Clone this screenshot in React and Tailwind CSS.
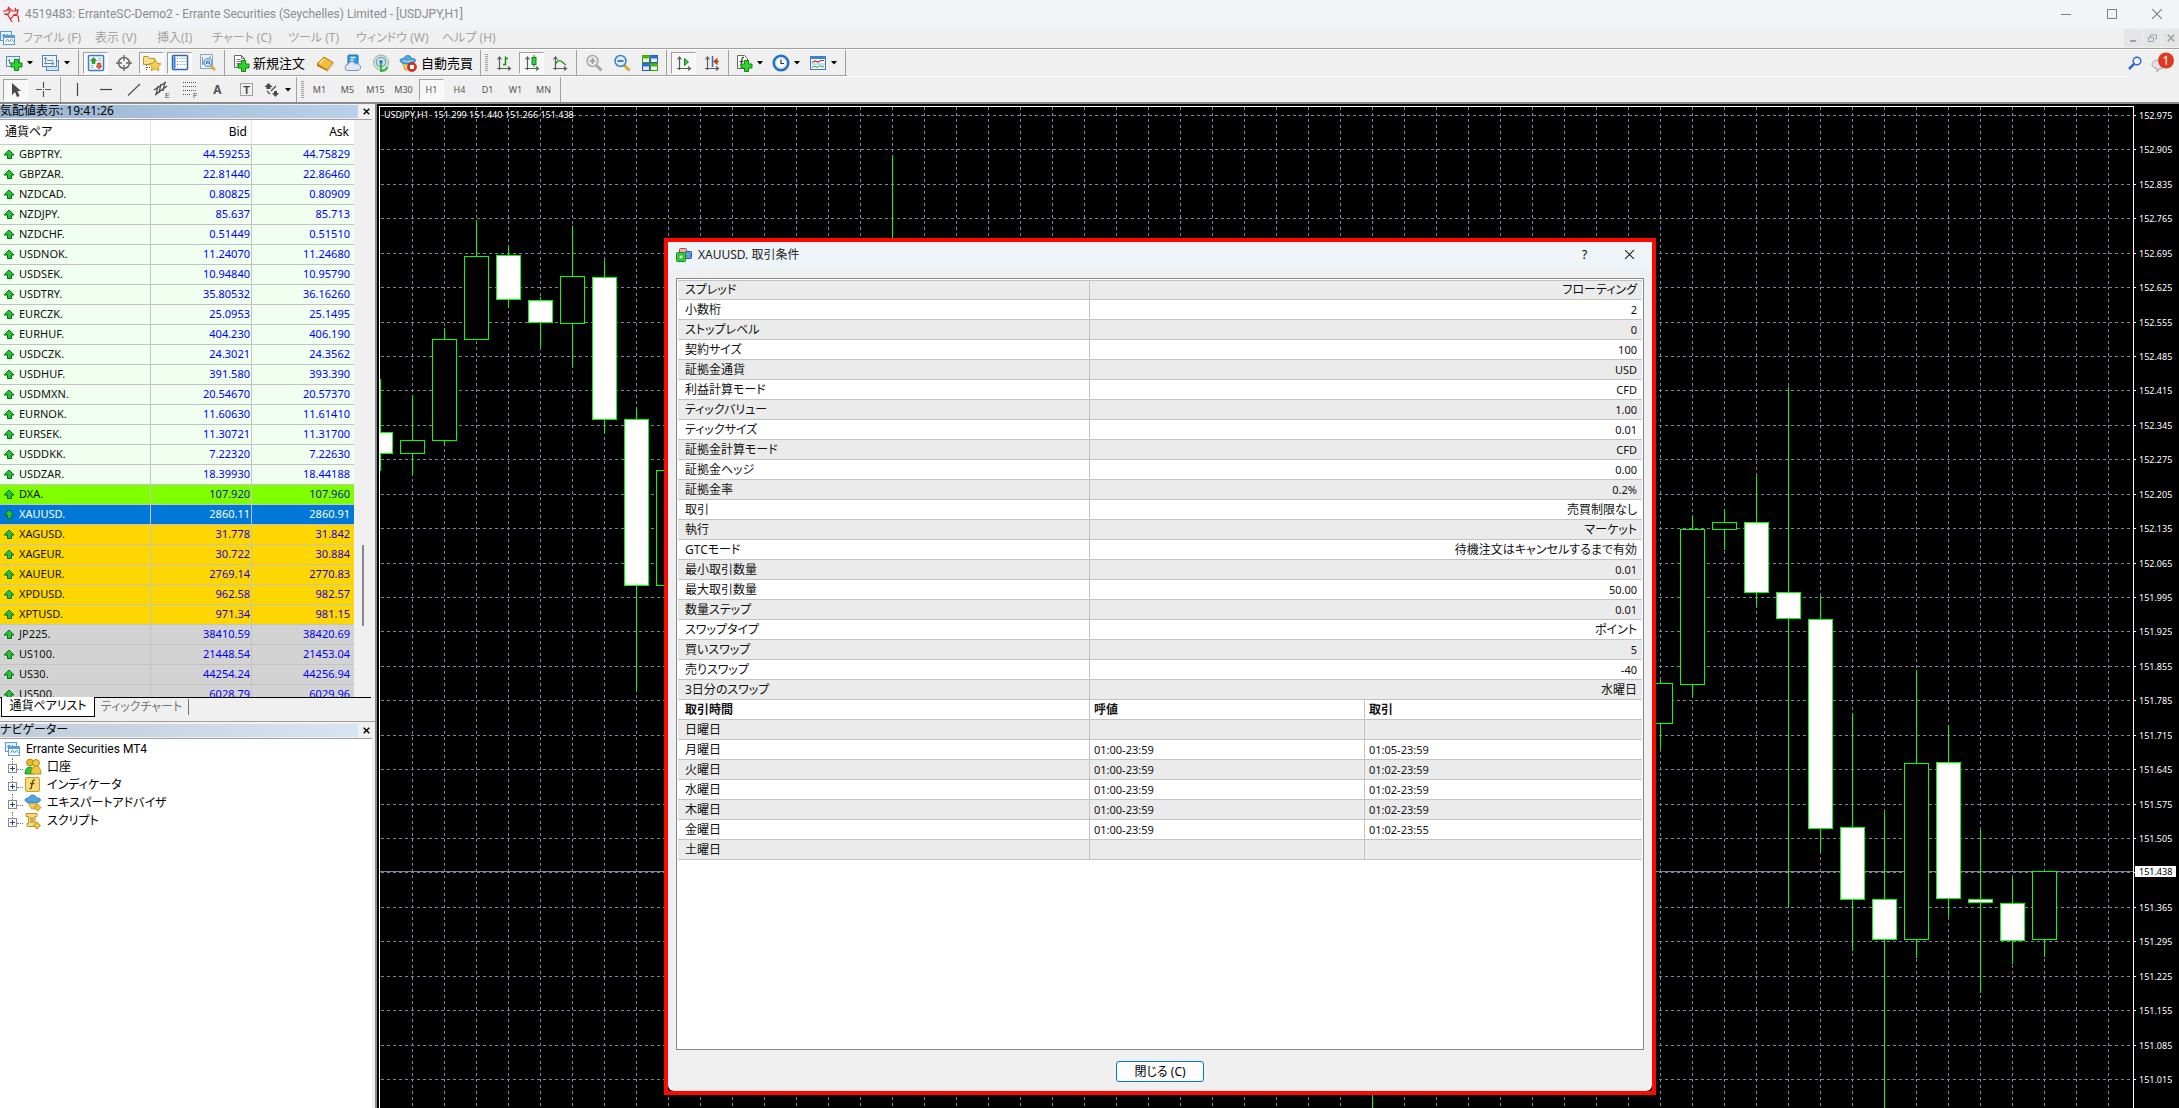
import React from "react";

const JP = "font-['Noto_Sans','Noto_Sans_CJK_JP',sans-serif]";

/* ---------- data ---------- */

const QUOTES = [
  ["GBPTRY.", "44.59253", "44.75829", "fx"],
  ["GBPZAR.", "22.81440", "22.86460", "fx"],
  ["NZDCAD.", "0.80825", "0.80909", "fx"],
  ["NZDJPY.", "85.637", "85.713", "fx"],
  ["NZDCHF.", "0.51449", "0.51510", "fx"],
  ["USDNOK.", "11.24070", "11.24680", "fx"],
  ["USDSEK.", "10.94840", "10.95790", "fx"],
  ["USDTRY.", "35.80532", "36.16260", "fx"],
  ["EURCZK.", "25.0953", "25.1495", "fx"],
  ["EURHUF.", "404.230", "406.190", "fx"],
  ["USDCZK.", "24.3021", "24.3562", "fx"],
  ["USDHUF.", "391.580", "393.390", "fx"],
  ["USDMXN.", "20.54670", "20.57370", "fx"],
  ["EURNOK.", "11.60630", "11.61410", "fx"],
  ["EURSEK.", "11.30721", "11.31700", "fx"],
  ["USDDKK.", "7.22320", "7.22630", "fx"],
  ["USDZAR.", "18.39930", "18.44188", "fx"],
  ["DXA.", "107.920", "107.960", "dxa"],
  ["XAUUSD.", "2860.11", "2860.91", "sel"],
  ["XAGUSD.", "31.778", "31.842", "metal"],
  ["XAGEUR.", "30.722", "30.884", "metal"],
  ["XAUEUR.", "2769.14", "2770.83", "metal"],
  ["XPDUSD.", "962.58", "982.57", "metal"],
  ["XPTUSD.", "971.34", "981.15", "metal"],
  ["JP225.", "38410.59", "38420.69", "index"],
  ["US100.", "21448.54", "21453.04", "index"],
  ["US30.", "44254.24", "44256.94", "index"],
  ["US500.", "6028.79", "6029.96", "index"],
];

const ROW_STYLE = {
  fx: "bg-[#f0fff0] text-[#0000f5]",
  dxa: "bg-[#7fff00] text-[#0a1aa0]",
  sel: "bg-[#0078d7] text-white",
  metal: "bg-[#ffd700] text-[#1c00d0]",
  index: "bg-[#d3d3d3] text-[#0000f5]",
};

const SPECS = [
  ["スプレッド", "フローティング"],
  ["小数桁", "2"],
  ["ストップレベル", "0"],
  ["契約サイズ", "100"],
  ["証拠金通貨", "USD"],
  ["利益計算モード", "CFD"],
  ["ティックバリュー", "1.00"],
  ["ティックサイズ", "0.01"],
  ["証拠金計算モード", "CFD"],
  ["証拠金ヘッジ", "0.00"],
  ["証拠金率", "0.2%"],
  ["取引", "売買制限なし"],
  ["執行", "マーケット"],
  ["GTCモード", "待機注文はキャンセルするまで有効"],
  ["最小取引数量", "0.01"],
  ["最大取引数量", "50.00"],
  ["数量ステップ", "0.01"],
  ["スワップタイプ", "ポイント"],
  ["買いスワップ", "5"],
  ["売りスワップ", "-40"],
  ["3日分のスワップ", "水曜日"],
];

const SESSIONS = [
  ["日曜日", "", ""],
  ["月曜日", "01:00-23:59", "01:05-23:59"],
  ["火曜日", "01:00-23:59", "01:02-23:59"],
  ["水曜日", "01:00-23:59", "01:02-23:59"],
  ["木曜日", "01:00-23:59", "01:02-23:59"],
  ["金曜日", "01:00-23:59", "01:02-23:55"],
  ["土曜日", "", ""],
];

/* centre x, body top, body bottom, high, low, bearish */
const CANDLES = [
  [380, 432, 453, 379, 471, 1],
  [412, 440, 453, 395, 475, 0],
  [444, 339, 440, 328, 445, 0],
  [476, 256, 339, 220, 339, 0],
  [508, 255, 299, 247, 308, 1],
  [540, 300, 322, 297, 347, 1],
  [572, 276, 323, 226, 367, 0],
  [604, 277, 419, 260, 434, 1],
  [636, 419, 585, 408, 691, 1],
  [668, 470, 585, 460, 600, 0],
  [892, 300, 420, 155, 500, 0],
  [1372, 700, 900, 650, 1108, 1],
  [1660, 683, 723, 680, 749, 0],
  [1692, 529, 684, 516, 697, 0],
  [1724, 522, 529, 509, 550, 0],
  [1756, 522, 592, 476, 606, 1],
  [1788, 592, 618, 387, 907, 1],
  [1820, 619, 828, 596, 852, 1],
  [1852, 827, 899, 713, 951, 1],
  [1884, 899, 939, 812, 1108, 1],
  [1916, 763, 939, 670, 958, 0],
  [1948, 762, 898, 725, 917, 1],
  [1980, 899, 902, 830, 993, 1],
  [2012, 903, 940, 878, 964, 1],
  [2044, 871, 939, 871, 957, 0],
];

const LEVELS = Array.from({ length: 29 }, (_, i) => ({
  y: Math.round(115 + i * 34.43),
  label: (152.975 - i * 0.07).toFixed(3),
}));

/* ---------- icons ---------- */

const S = ({ w = 18, h = 18, children }) => (
  <svg width={w} height={h} viewBox={`0 0 ${w} ${h}`} className="shrink-0" aria-hidden="true">{children}</svg>
);

const Plus = ({ x = 8, y = 7 }) => (
  <path d={`M${x + 3.5} ${y + .5}h4v3.5h3.500v4h-3.500v3.500h-4v-3.500h-3.500v-4h3.500z`} fill="#2fd32f" stroke="#0a8a0a" />
);

const NewChartIcon = () => (
  <S>
    <rect x="1.500" y="2.500" width="13" height="10" fill="#e9f3fc" stroke="#5b8cc0" />
    <path d="M4.500 5v5M3 6.500h1.500M4.500 8.500h2M10.500 4.500v4" stroke="#6a87a8" fill="none" />
    <Plus x={6} y={5} />
  </S>
);
const ProfilesIcon = () => (
  <S>
    <rect x="4.500" y="6.500" width="12" height="10" fill="#cfe4f8" stroke="#5b8cc0" />
    <rect x=".5" y="1.500" width="14" height="11" fill="#eef6fd" stroke="#4d82bd" />
    <path d="M3.500 3.500v7M2 9.500h10M10 8l2 1.500-2 1.500M2 5l1.500-1.500L5 5M5 6.500h6" stroke="#6a87a8" fill="none" />
  </S>
);
const MarketWatchIcon = () => (
  <S>
    <rect x="1.500" y="1.500" width="15" height="15" rx="1" fill="#f3f9ff" stroke="#3f7fc0" strokeWidth="1.5" />
    <path d="M3.500 6.500l3-3 3 3H8v3H5v-3z" fill="#25b025" stroke="#0b7a0b" strokeWidth=".6" />
    <path d="M9 12l3 3 3-3h-1.500V9h-3v3z" fill="#f2603a" stroke="#b22a12" strokeWidth=".6" />
    <path d="M3.500 11.500h3M3.500 13.500h3M11 4.500h3M11 6.500h3" stroke="#9bb9d6" />
  </S>
);
const DataWindowIcon = () => (
  <S>
    <circle cx="9" cy="9" r="5.500" fill="none" stroke="#666" strokeWidth="1.500" />
    <path d="M9 1v6M9 11v6M1 9h6M11 9h6" stroke="#666" strokeWidth="1.300" />
  </S>
);
const NavigatorIcon = () => (
  <S w={20}>
    <path d="M1.500 3.500v7h11v-6h-5l-1.500-2h-4z" fill="#f8df83" stroke="#b9932a" />
    <path d="M4.500 11v5M5 13.500h3" stroke="#555" strokeDasharray="1 1" />
    <path d="M13 5.500l1.900 3.700 4.100.6-3 2.900.7 4-3.700-1.900-3.700 1.900.7-4-3-2.900 4.100-.6z" fill="#fbcf45" stroke="#b7861a" strokeWidth=".8" />
  </S>
);
const TerminalIcon = () => (
  <S>
    <rect x="1.500" y="1.500" width="15" height="14" rx="1" fill="#fff" stroke="#2e67ad" strokeWidth="1.500" />
    <path d="M3.500 2.500v12" stroke="#2f7fe0" strokeWidth="2" />
    <path d="M6 4.500h1M6 7.500h1M6 10.500h1" stroke="#d33" />
    <path d="M8 4.500h7M8 7.500h7M8 10.500h7" stroke="#b9cfe8" />
  </S>
);
const TesterIcon = () => (
  <S>
    <rect x="1.500" y=".5" width="12" height="14" fill="#f0f4f9" stroke="#8fa6bf" />
    <path d="M3.500 3v8M3 9h3M11 2v7" stroke="#7892ad" />
    <circle cx="9" cy="8.500" r="4" fill="#cfe6fa" fillOpacity=".85" stroke="#5a92c7" strokeWidth="1.200" />
    <path d="M7.500 7v3M9 6v4M10.500 7.500v3" stroke="#4477a8" />
    <path d="M12 12l4 4" stroke="#d8a92c" strokeWidth="2.500" />
  </S>
);
const NewOrderIcon = () => (
  <S>
    <path d="M2.500 1.500h7l3 3v9h-10z" fill="#fff" stroke="#666" />
    <path d="M9.500 1.500v3h3M4.500 5.500h4M4.500 7.500h6M4.500 9.500h4M4.500 11.500h3" stroke="#777" fill="none" />
    <Plus x={6} y={6} />
  </S>
);
const BookIcon = () => (
  <S>
    <path d="M1 10l7-7 9 5.500-6 7.500z" fill="#f3bf3b" stroke="#a9741a" />
    <path d="M1 10v2l10 5v-1.500z" fill="#b87a1c" />
    <path d="M11 16l6-7.500v2L11 17.500z" fill="#fff3cf" stroke="#a9741a" strokeWidth=".5" />
    <path d="M4 9l4-4" stroke="#ffe79a" strokeWidth="1.500" />
  </S>
);
const VpsIcon = () => (
  <S>
    <rect x="4" y="1" width="10" height="10" rx="1" fill="#2f9be8" stroke="#1a6db3" />
    <path d="M6.500 3.500h5M6.500 6h3" stroke="#e3f3ff" strokeWidth="1.300" />
    <path d="M4 16.500a3 3 0 010-6 4 4 0 017.500-.5 3.300 3.300 0 013 6.500z" fill="#dfe8f3" stroke="#7b97b8" />
  </S>
);
const SignalIcon = () => (
  <S>
    <circle cx="9" cy="8.500" r="7.500" fill="#d5e6d8" stroke="#8fb59c" />
    <circle cx="9" cy="8" r="4.700" fill="none" stroke="#6a9fc4" strokeWidth="1.300" />
    <circle cx="9" cy="8" r="2" fill="#2f86d0" />
    <path d="M9 9v8c4 0 6-2 6.500-4" fill="none" stroke="#3fb049" strokeWidth="2" />
  </S>
);
const AutoIcon = () => (
  <S>
    <path d="M3 8h11l-2 8H6z" fill="#f3cf58" stroke="#b08a24" strokeWidth=".7" />
    <path d="M1 6.500c0-2 3-2 4-2 .5-4 7-4 7.500 0 1 0 4 0 4 2S13.500 10 9 10 1 8.500 1 6.500z" fill="#4fa7dd" stroke="#2575ab" strokeWidth=".8" />
    <path d="M4 6.500c2 1.500 7 1.500 9.500 0" fill="none" stroke="#bfe3f7" />
    <circle cx="13" cy="13" r="4.500" fill="#dd3423" stroke="#9e1c10" strokeWidth=".6" />
    <rect x="11" y="11" width="4" height="4" fill="#fff" />
  </S>
);
const Axes = () => (
  <path d="M4.500 3v13M2.500 5.500l2-2.500 2 2.500M2 14.500h13M13 12.500l2.500 2-2.500 2" fill="none" stroke="#5c5c5c" strokeWidth="1.200" />
);
const BarsIcon = () => (<S><Axes /><path d="M10.500 2.500v9M10.500 4.500h2.500M8 10.500h2.500" stroke="#159015" strokeWidth="1.500" fill="none" /></S>);
const CandlesIcon = () => (<S><Axes /><path d="M11 1v12" stroke="#118811" /><rect x="9" y="3.500" width="4" height="7" fill="#2fd04a" stroke="#118811" /></S>);
const LineIcon = () => (<S><Axes /><path d="M4 11c2-4 4-5 6-4s3 3 5 4" fill="none" stroke="#159015" strokeWidth="1.300" /></S>);
const ZoomIcon = ({ plus }) => (
  <S>
    <path d="M11 11l5.500 5.500" stroke={plus ? "#a5a5a5" : "#d8a92c"} strokeWidth="3" />
    <circle cx="7.500" cy="7" r="5.500" fill={plus ? "#ececec" : "#d9edfc"} stroke={plus ? "#a8a8a8" : "#3c83c6"} strokeWidth="1.500" />
    <path d={plus ? "M4.500 7h6M7.500 4v6" : "M4.500 7h6"} stroke={plus ? "#999" : "#2d6cae"} strokeWidth="1.700" />
  </S>
);
const TileIcon = () => (
  <S>
    <rect x="1.500" y="1.500" width="7" height="7" fill="#e9f8e0" stroke="#3e9a12" /><path d="M1 3h8" stroke="#4db51b" strokeWidth="3" />
    <rect x="9.500" y="1.500" width="7" height="7" fill="#e3edfb" stroke="#2458b8" /><path d="M9 3h8" stroke="#2e6be0" strokeWidth="3" />
    <rect x="1.500" y="9.500" width="7" height="7" fill="#e3edfb" stroke="#2458b8" /><path d="M1 11h8" stroke="#2e6be0" strokeWidth="3" />
    <rect x="9.500" y="9.500" width="7" height="7" fill="#e9f8e0" stroke="#3e9a12" /><path d="M9 11h8" stroke="#4db51b" strokeWidth="3" />
  </S>
);
const AutoScrollIcon = () => (<S><Axes /><path d="M9.500 4.500v7l4-3.500z" fill="#35c94a" stroke="#118811" /></S>);
const ShiftIcon = () => (<S><Axes /><path d="M9.500 2v11" stroke="#2c6fb5" strokeWidth="1.500" /><path d="M16 7.500h-4M14 5l-3 2.500 3 2.500z" stroke="#c2410c" strokeWidth="1.200" fill="#c2410c" /></S>);
const IndicatorsIcon = () => (
  <S>
    <path d="M2.500 1.500h7l3 3v10h-10z" fill="#fff" stroke="#666" />
    <path d="M9 3.500c-2-.5-2 1-2.200 3L6 12M4.500 7.500h4" stroke="#333" fill="none" strokeWidth="1.200" />
    <Plus x={6} y={6} />
  </S>
);
const ClockIcon = () => (
  <S>
    <circle cx="9" cy="9" r="7.300" fill="#eef5fb" stroke="#1f6fcb" strokeWidth="2.500" />
    <circle cx="9" cy="9" r="5.300" fill="#fff" stroke="#9fb9d4" strokeWidth=".6" />
    <path d="M9 5.500V9.500h3" stroke="#333" fill="none" strokeWidth="1.200" />
  </S>
);
const TemplateIcon = () => (
  <S>
    <rect x="1.500" y="2.500" width="15" height="13" fill="#f4f9ff" stroke="#3b78bd" />
    <path d="M1 3.500h16" stroke="#3b82d0" strokeWidth="3" />
    <path d="M2 10h14" stroke="#9cc0e4" />
    <path d="M3 8.500l3-1.500 3 1 3-1.500h3" stroke="#b5381c" fill="none" strokeWidth="1.200" />
    <path d="M3 13.500l3-1.500 2 1.500 3-2 2 1.500 2-1" stroke="#2c9a2c" fill="none" />
  </S>
);
const CursorIcon = () => (<S><path d="M5 2v12l3-3 2 5 2.500-1-2-5H14z" fill="#4a4a4a" /></S>);
const CrossIcon = () => (<S><path d="M8.500 1v6M8.500 10v6M1 8.500h6M10 8.500h6M8 8.500h1" stroke="#555" strokeWidth="1.200" /></S>);
const VLineIcon = () => (<S><path d="M8.500 2v13" stroke="#444" strokeWidth="1.200" /></S>);
const HLineIcon = () => (<S><path d="M3 8.500h12" stroke="#444" strokeWidth="1.200" /></S>);
const TrendIcon = () => (<S><path d="M3 14.500L15 3" stroke="#555" strokeWidth="1.300" /></S>);
const ChannelIcon = () => (
  <S>
    <path d="M1 9L13 1M2 14L14 5M5 5l-2 9M8 3L6 12M12 1l-2 9" stroke="#4a4a4a" fill="none" strokeWidth="1.200" />
    <text x="12" y="17" fontSize="7" fill="#444" fontFamily="Liberation Sans">E</text>
  </S>
);
const FiboIcon = () => (
  <S>
    <path d="M2 1.500h14M2 5.500h14M2 9.500h14M2 13.500h8" stroke="#555" strokeDasharray="1 1" />
    <text x="12" y="17" fontSize="7" fill="#444" fontFamily="Liberation Sans">F</text>
  </S>
);
const LabelIcon = () => (
  <S>
    <rect x="3.500" y="2.500" width="12" height="12" fill="none" stroke="#555" strokeDasharray="1 1" />
    <text x="9.500" y="12.500" fontSize="11" fontWeight="bold" textAnchor="middle" fill="#444" fontFamily="Liberation Sans">T</text>
  </S>
);
const ArrowsIcon = () => (
  <S>
    <path d="M1.500 6l4-4 4 4h-2v2h-4V6z" fill="#4a4a4a" /><path d="M9 12h2v-2h3v2h2l-3.500 4z" fill="#4a4a4a" />
    <path d="M4 10l3 3M8 10l5-5" stroke="#4a4a4a" strokeWidth="1.200" />
  </S>
);
const WindowsIcon = () => (
  <S w={16} h={16}>
    <rect x=".5" y="1.500" width="11" height="9" fill="#e6f2fd" stroke="#5a9bdc" />
    <path d="M2 6l2-2 2 2 2-2" stroke="#5a9bdc" fill="none" />
    <rect x="3.500" y="5.500" width="11" height="9" fill="#fff" stroke="#5a9bdc" />
    <path d="M4 7h10" stroke="#5a9bdc" strokeWidth="2" />
    <path d="M5.500 12l2-3 2 3 2-3 2 3" stroke="#5a9bdc" fill="none" />
  </S>
);
const UpArrow = () => (
  <svg width="12" height="12" viewBox="0 0 12 12" className="shrink-0" aria-hidden="true">
    <path d="M6 2L11 7H8.500v3.500h-4V7H1z" fill="#23c435" stroke="#0a6b14" />
  </svg>
);
const AccountsIcon = () => (
  <S>
    <circle cx="6" cy="4.500" r="3.500" fill="#e8b820" stroke="#a87d10" strokeWidth=".8" />
    <circle cx="12" cy="5" r="3.500" fill="#f0c83a" stroke="#a87d10" strokeWidth=".8" />
    <path d="M1 16c0-5 2-7 5-7s4 3 4 7z" fill="#2fc23a" stroke="#138a1c" strokeWidth=".8" />
    <path d="M7 16c0-5 2-8 5-8s5 3 5 8z" fill="#f0c83a" stroke="#a87d10" strokeWidth=".8" />
  </S>
);
const FnIcon = () => (
  <S>
    <rect x="1.500" y="1.500" width="14" height="14" rx="1.500" fill="#f8dc7c" stroke="#c99a2a" />
    <path d="M11 4c-2-.6-2.400 1-2.700 3L7.500 11c-.3 1.500-.9 2-2 1.700M6 7.500h4.500" fill="none" stroke="#6b4a0c" strokeWidth="1.300" />
  </S>
);
const ExpertIcon = () => (
  <S>
    <path d="M3.500 8h10l-2.500 7H7.500z" fill="#f3cf58" stroke="#b08a24" strokeWidth=".7" />
    <path d="M1 6c0-2 3-2 4-2 .5-4 7-4 7.500 0 1 0 4 0 4 2s-4 3-8 3S1 8 1 6z" fill="#4fa7dd" stroke="#2575ab" strokeWidth=".8" />
    <path d="M13.500 10l3.500 3.500-3.500 3.500-3.500-3.500z" fill="#f0c23a" stroke="#a87d10" strokeWidth=".8" />
  </S>
);
const ScriptIcon = () => (
  <S>
    <path d="M2 1.500h11v3h-2v7h2v3H3v-3h1.500v-7H2z" fill="#f8dc7c" stroke="#b9932a" />
    <path d="M6 6h4M6 8h4M6 10h4" stroke="#a8822a" />
    <path d="M13 10l3.500 3.500L13 17l-3.500-3.500z" fill="#f0c23a" stroke="#a87d10" strokeWidth=".8" />
  </S>
);
const Caret = () => (
  <svg width="6" height="4" viewBox="0 0 6 4" aria-hidden="true"><path d="M0 0h6L3 3.500z" fill="#000" /></svg>
);
const Cross = ({ size = 10, color = "#000", stroke = 1 }) => (
  <svg width={size} height={size} viewBox="0 0 10 10" aria-hidden="true">
    <path d="M1 1l8 8M9 1l-8 8" stroke={color} strokeWidth={stroke} />
  </svg>
);

/* ---------- toolbar parts ---------- */

const Tool = ({ label, pressed, children }) => (
  <button
    type="button"
    aria-label={label}
    aria-pressed={!!pressed}
    className={`flex h-[22px] w-[25px] shrink-0 items-center justify-center ${
      pressed ? "border border-t-[#a0a0a0] border-r-white border-b-white border-l-[#a0a0a0] bg-[#f8f8f8]" : ""
    }`}
  >
    {children}
  </button>
);

const DropTool = ({ label, children }) => (
  <button type="button" aria-label={label} className="flex h-[22px] w-[34px] shrink-0 items-center gap-1 pl-0.5">
    {children}
    <Caret />
  </button>
);

const Sep = () => <span className="mx-px w-px shrink-0 self-stretch bg-[#a0a0a0]" />;

const Grip = () => (
  <span className="my-1 w-[3px] shrink-0 self-stretch bg-[repeating-linear-gradient(#a0a0a0_0_1px,#f0f0f0_1px_2px)]" />
);

const TitleBar = () => (
  <div className="flex h-7 items-center bg-[#f2f3f7] pl-[3px] font-['Roboto',sans-serif] text-xs leading-4 text-[#8b8b8b]">
    <svg width="17" height="17" viewBox="0 0 17 17" aria-hidden="true">
      <path d="M0 5h3l2-2 2 3-2 2H1l4 1 4 7M5 1l4 4M9 5h3l3-1-1 4-3 1 4 1 1 6M12 2l1 3M11 9l-4 5" fill="none" stroke="#e02020" strokeWidth="1.200" />
    </svg>
    <h1 className="ml-[5px] flex-1">4519483: ErranteSC-Demo2 - Errante Securities (Seychelles) Limited - [USDJPY,H1]</h1>
    <button type="button" aria-label="Minimize" className="flex h-7 w-[46px] items-center justify-center">
      <span className="h-px w-2.5 bg-[#808080]" />
    </button>
    <button type="button" aria-label="Maximize" className="flex h-7 w-[46px] items-center justify-center">
      <span className="size-2.5 border border-[#808080]" />
    </button>
    <button type="button" aria-label="Close" className="flex h-7 w-11 items-center justify-center">
      <Cross size={12} color="#808080" />
    </button>
  </div>
);

const MENU = [
  ["ファイル (F)", "w-[72px]"],
  ["表示 (V)", "w-[62px]"],
  ["挿入(I)", "w-[55px]"],
  ["チャート (C)", "w-[76px]"],
  ["ツール (T)", "w-[68px]"],
  ["ウィンドウ (W)", "w-[86px]"],
  ["ヘルプ (H)", "w-[60px]"],
];

const MenuBar = () => (
  <div className="flex h-5 items-center text-xs leading-4 text-[#a3a3a3]">
    <span className="w-[23px]"><WindowsIcon /></span>
    <nav className="flex flex-1">
      {MENU.map(([t, w]) => (
        <button key={t} type="button" className={`${w} text-left whitespace-nowrap`}>{t}</button>
      ))}
    </nav>
    <div className="flex gap-px">
      <button type="button" aria-label="Minimize chart" className="flex h-[18px] w-[18px] items-end justify-center bg-[#e5e5e5] pb-[5px]">
        <span className="h-0.5 w-1.5 bg-[#98a2b3]" />
      </button>
      <button type="button" aria-label="Restore chart" className="flex h-[18px] w-[18px] items-center justify-center bg-[#e5e5e5]">
        <svg width="9" height="9" viewBox="0 0 9 9" aria-hidden="true"><path d="M2.500 3V1h6v4H7M.5 3.500h5v4h-5z" fill="none" stroke="#98a2b3" /></svg>
      </button>
      <button type="button" aria-label="Close chart" className="flex h-[18px] w-[17px] items-center justify-center bg-[#e5e5e5]">
        <Cross size={8} color="#98a2b3" stroke={2} />
      </button>
    </div>
  </div>
);

const FRAMES = ["M1", "M5", "M15", "M30", "H1", "H4", "D1", "W1", "MN"];

const Toolbars = () => (
  <div className="flex justify-between border-t border-[#a0a0a0]">
    <div className="flex-1 border-t border-white">
      <div className="flex h-[26px] w-fit items-center gap-[3px] border-b border-[#a0a0a0] pl-[3px]">
        <DropTool label="新規チャート"><NewChartIcon /></DropTool>
        <DropTool label="プロファイル"><ProfilesIcon /></DropTool>
        <Sep />
        <Tool label="気配値表示" pressed><MarketWatchIcon /></Tool>
        <Tool label="データウィンドウ"><DataWindowIcon /></Tool>
        <Tool label="ナビゲーター" pressed><NavigatorIcon /></Tool>
        <Tool label="ターミナル" pressed><TerminalIcon /></Tool>
        <Tool label="ストラテジーテスター"><TesterIcon /></Tool>
        <Sep />
        <button type="button" className="flex h-[22px] w-20 items-center gap-[3px] pl-[3px] text-[13px] leading-4 whitespace-nowrap"><NewOrderIcon />新規注文</button>
        <Tool label="メタエディター"><BookIcon /></Tool>
        <Tool label="VPS"><VpsIcon /></Tool>
        <Tool label="シグナル"><SignalIcon /></Tool>
        <button type="button" className="flex h-[22px] w-20 items-center gap-1 pl-[3px] text-[13px] leading-4 whitespace-nowrap"><AutoIcon />自動売買</button>
        <Sep />
        <Grip />
        <Tool label="バーチャート"><BarsIcon /></Tool>
        <Tool label="ローソク足" pressed><CandlesIcon /></Tool>
        <Tool label="ラインチャート"><LineIcon /></Tool>
        <Sep />
        <Tool label="拡大"><ZoomIcon plus /></Tool>
        <Tool label="縮小"><ZoomIcon /></Tool>
        <Tool label="整列"><TileIcon /></Tool>
        <Sep />
        <Tool label="自動スクロール" pressed><AutoScrollIcon /></Tool>
        <Tool label="チャートシフト"><ShiftIcon /></Tool>
        <Sep />
        <DropTool label="インディケータ"><IndicatorsIcon /></DropTool>
        <DropTool label="時間足設定"><ClockIcon /></DropTool>
        <DropTool label="定型チャート"><TemplateIcon /></DropTool>
        <Sep />
      </div>
      <div className="border-t border-white">
        <div className="flex h-[25px] w-fit items-center gap-[3px] pl-[3px] text-[#555]">
          <Tool label="カーソル" pressed><CursorIcon /></Tool>
          <Tool label="クロスヘア"><CrossIcon /></Tool>
          <Sep />
          <Tool label="垂直線"><VLineIcon /></Tool>
          <Tool label="水平線"><HLineIcon /></Tool>
          <Tool label="トレンドライン"><TrendIcon /></Tool>
          <Tool label="チャネル"><ChannelIcon /></Tool>
          <Tool label="フィボナッチ"><FiboIcon /></Tool>
          <button type="button" className="h-[22px] w-[25px] text-xs leading-4 font-bold">A</button>
          <Tool label="テキストラベル"><LabelIcon /></Tool>
          <button type="button" aria-label="矢印" className="flex h-[22px] w-[31px] items-center gap-1 pl-0.5"><ArrowsIcon /><Caret /></button>
          <Sep />
          <Grip />
          {FRAMES.map((f) => (
            <button
              key={f}
              type="button"
              aria-pressed={f === "H1"}
              className={`flex h-[22px] w-[25px] items-center justify-center text-[9px] leading-4 ${
                f === "H1" ? "border border-t-[#a0a0a0] border-r-white border-b-white border-l-[#a0a0a0] bg-[#f8f8f8]" : ""
              }`}
            >
              {f}
            </button>
          ))}
          <Sep />
        </div>
      </div>
    </div>
    <div className="flex items-start gap-[9px] border-t border-white pt-0.5 pr-1">
      <button type="button" aria-label="検索" className="mt-1">
        <svg width="14" height="14" viewBox="0 0 14 14" aria-hidden="true">
          <path d="M1 13l5-5" stroke="#2b6cd4" strokeWidth="2.500" /><circle cx="9" cy="5" r="3.800" fill="#f4f9ff" stroke="#2b6cd4" strokeWidth="1.500" />
        </svg>
      </button>
      <button type="button" aria-label="通知">
        <svg width="24" height="22" viewBox="0 0 24 22" aria-hidden="true">
          <path d="M8 8c4 0 6 2 6 4.500S12 17 8 17l-2 3v-3.500C3 16 1 14.500 1 12.500 1 10 4 8 8 8z" fill="#e3e3e3" stroke="#a5a5a5" />
          <circle cx="15" cy="8.500" r="8" fill="#dd3a22" />
          <text x="15" y="12.500" fontSize="12" textAnchor="middle" fill="#fff" fontFamily="Noto Sans">1</text>
        </svg>
      </button>
    </div>
  </div>
);

/* ---------- left panels ---------- */

const PanelTitle = ({ children, active }) => (
  <div className="flex h-[15px] w-[372px] shrink-0 border-b border-[#a0a0a0]">
    <h2 className={`h-[13px] w-[358px] bg-linear-to-r text-xs leading-3 whitespace-nowrap ${active ? "from-[#99b4d1] to-[#b9d1ea]" : "from-[#bfcddb] to-[#d7e4f2]"}`}>
      {children}
    </h2>
    <button type="button" aria-label="閉じる" className="flex h-[13px] flex-1 items-center justify-center pl-0.5"><Cross size={7} stroke={2} /></button>
  </div>
);

const MarketWatch = () => (
  <section className="flex h-[618px] shrink-0 flex-col border-b border-[#a0a0a0] pt-px">
    <PanelTitle active>気配値表示: 19:41:26</PanelTitle>
    <div className="flex h-[577px] overflow-hidden">
      <div className="w-[354px]">
        <table className="w-full table-fixed border-separate border-spacing-0">
          <colgroup><col className="w-[151px]" /><col className="w-[101px]" /><col /></colgroup>
          <thead>
            <tr className="h-[25px] bg-white text-xs leading-4">
              <th className="border-r border-b border-r-[#e5e5e5] border-b-[#c8c8c8] pl-[5px] text-left font-normal">通貨ペア</th>
              <th className="border-r border-b border-r-[#e5e5e5] border-b-[#c8c8c8] pr-1 text-right font-normal">Bid</th>
              <th className="border-b border-[#c8c8c8] pr-[5px] text-right font-normal">Ask</th>
            </tr>
          </thead>
          <tbody>
            {QUOTES.map(([s, b, a, k]) => (
              <tr key={s} className={`h-5 text-[11px] leading-4 ${ROW_STYLE[k]}`}>
                <td className={`border-r border-b border-[#c3c3c3] pb-0.5 ${k === "sel" ? "text-white" : "text-[#111]"}`}>
                  <span className="flex items-center gap-1 pl-[3px]"><UpArrow />{s}</span>
                </td>
                <td className="border-r border-b border-[#c3c3c3] pr-px pb-0.5 text-right">{b}</td>
                <td className="border-b border-[#c3c3c3] pr-1 pb-0.5 text-right">{a}</td>
              </tr>
            ))}
          </tbody>
        </table>
      </div>
      <div className="flex-1 pl-2 pt-[425px]"><div className="h-[81px] w-0.5 bg-[#888]" /></div>
    </div>
    <div className="flex w-[371px] text-xs leading-4">
      <span className="w-px border-t border-black" />
      <button type="button" className="h-5 w-[94px] border border-t-0 border-black bg-white pb-0.5 whitespace-nowrap">通貨ペアリスト</button>
      <div className="flex flex-1 border-t border-black">
        <button type="button" className="mt-px h-4 w-[94px] border-r border-[#777] text-[#777] whitespace-nowrap">ティックチャート</button>
      </div>
    </div>
  </section>
);

const TREE = [
  ["口座", AccountsIcon],
  ["インディケータ", FnIcon],
  ["エキスパートアドバイザ", ExpertIcon],
  ["スクリプト", ScriptIcon],
];

const Navigator = () => (
  <section className="flex min-h-0 flex-1 flex-col pt-0.5">
    <PanelTitle>ナビゲーター</PanelTitle>
    <div className="w-[372px] flex-1 bg-white pt-px text-xs leading-4">
      <div className="flex h-[18px] items-center gap-[5px] pl-[5px] font-['Roboto',sans-serif]"><WindowsIcon />Errante Securities MT4</div>
      <ul>
        {TREE.map(([t, Icon]) => (
          <li key={t} className="flex h-[18px] items-center pl-2">
            <span className="flex h-full flex-col items-center">
              <span className="h-1.5 border-l border-dotted border-[#777]" />
              <svg width="9" height="9" viewBox="0 0 9 9" aria-hidden="true">
                <rect x=".5" y=".5" width="8" height="8" fill="#fff" stroke="#8a8a8a" /><path d="M2 4.500h5M4.500 2v5" stroke="#22409a" />
              </svg>
            </span>
            <span className="mt-1 w-1.5 border-t border-dotted border-[#777]" />
            <span className="ml-px"><Icon /></span>
            <span className="ml-[5px]">{t}</span>
          </li>
        ))}
      </ul>
    </div>
  </section>
);

/* ---------- chart ---------- */

const Chart = () => (
  <main className="flex min-w-0 flex-1 bg-black">
    <svg className="h-full min-w-0 flex-1 text-[9px]" shapeRendering="crispEdges" role="img" aria-label="USDJPY,H1">
      <g transform="translate(-377 -104)">
        {LEVELS.map((l) => (
          <line key={l.y} x1="381" x2="2133" y1={l.y + 0.5} y2={l.y + 0.5} stroke="#778899" strokeDasharray="3 3" />
        ))}
        {Array.from({ length: 54 }, (_, i) => 412 + i * 32).map((x) => (
          <line key={x} x1={x + 0.5} x2={x + 0.5} y1="107" y2="1108" stroke="#778899" strokeDasharray="3 3" />
        ))}
        <line x1="380" x2="2133" y1="871.5" y2="871.5" stroke="#778899" />
        {CANDLES.map(([x, t, b, h, l, bear]) => (
          <g key={x} stroke="#00ff00">
            <line x1={x + 0.5} x2={x + 0.5} y1={h} y2={l} />
            <rect x={x - 11.5} y={t + 0.5} width="24" height={b - t} fill={bear ? "#fff" : "#000"} />
          </g>
        ))}
        <rect x="377" y="104" width="2" height="1004" fill="#000" />
        <path d="M379.500 1108V106.500H2133" fill="none" stroke="#fff" />
        <text x="384" y="118" fill="#fff" xmlSpace="preserve" className="whitespace-pre">{"USDJPY,H1  151.299 151.440 151.266 151.438"}</text>
      </g>
    </svg>
    <svg className="h-full w-[46px] shrink-0 text-[9px]" shapeRendering="crispEdges" aria-hidden="true">
      <g transform="translate(-2133 -104)">
        <path d="M2133.500 106V1108" stroke="#fff" />
        {LEVELS.filter((l) => l.y !== 873).map((l) => (
          <g key={l.y} fill="#fff">
            <rect x="2134" y={l.y} width="2" height="1" />
            <text x="2139" y={l.y + 4}>{l.label}</text>
          </g>
        ))}
        <rect x="2135" y="866" width="41" height="11" fill="#fff" />
        <text x="2139" y="875" fill="#000">151.438</text>
      </g>
    </svg>
  </main>
);

/* ---------- dialog ---------- */

const CELL = "border-b border-[#c3c3c3] whitespace-nowrap overflow-hidden";
const isLatin = (t) => /^[\x20-\x7e]*$/.test(t);

const ContractDialog = () => (
  <div role="dialog" aria-labelledby="dlg-title" className="absolute top-[238px] bottom-[13px] left-[664px] w-[992px] border-4 border-[#ff0800] bg-black">
    <div className="flex h-full flex-col overflow-hidden rounded-b-md bg-[#f0f0f0]">
      <div className="flex h-7 shrink-0 items-center bg-[#eff4f8] pb-[3px] pl-2">
        <S w={16} h={16}>
          <rect x="3.500" y="1.500" width="7" height="6" rx="1" fill="#f3b0a5" stroke="#b5442e" />
          <rect x="9.500" y="4.500" width="6" height="7" rx="1" fill="#5f9be0" stroke="#2456a5" />
          <rect x=".5" y="5.500" width="9" height="9" rx="1" fill="#3fd03f" stroke="#138a1c" />
          <rect x="3" y="8" width="4" height="4" fill="#c5f5c0" stroke="#138a1c" strokeWidth=".7" />
        </S>
        <h2 id="dlg-title" className="ml-1.5 flex-1 text-xs leading-4 text-[#222]">XAUUSD. 取引条件</h2>
        <button type="button" aria-label="ヘルプ" className="w-[45px] text-xs leading-4">?</button>
        <button type="button" aria-label="閉じる" className="flex h-6 w-[45px] items-center justify-center"><Cross size={11} color="#222" /></button>
      </div>
      <div className="mx-2 mt-2 min-h-0 flex-1 border border-[#828790] bg-white p-px">
        <table className="w-full table-fixed border-separate border-spacing-0 text-xs leading-4 text-[#111]">
          <colgroup><col className="w-[412px]" /><col className="w-[275px]" /><col /></colgroup>
          <tbody>
            {SPECS.map(([k, v], i) => (
              <tr key={k} className={`h-5 ${i % 2 ? "bg-white" : "bg-[#ebebeb]"}`}>
                <th scope="row" className={`${CELL} border-r pl-[7px] text-left font-normal ${i ? "" : "border-t"}`}>{k}</th>
                <td colSpan={2} className={`${CELL} pr-[5px] text-right ${i ? "" : "border-t"} ${isLatin(v) ? "text-[11px]" : ""}`}>{v}</td>
              </tr>
            ))}
            <tr className="h-5 bg-white">
              <th scope="col" className={`${CELL} border-r pl-[7px] text-left font-bold`}>取引時間</th>
              <th scope="col" className={`${CELL} border-r pl-1 text-left font-bold`}>呼値</th>
              <th scope="col" className={`${CELL} pl-1 text-left font-bold`}>取引</th>
            </tr>
            {SESSIONS.map(([d, q, t], i) => (
              <tr key={d} className={`h-5 ${i % 2 ? "bg-white" : "bg-[#ebebeb]"}`}>
                <th scope="row" className={`${CELL} border-r pl-[7px] text-left font-normal`}>{d}</th>
                <td className={`${CELL} border-r pl-1 text-[11px]`}>{q}</td>
                <td className={`${CELL} pl-1 text-[11px]`}>{t}</td>
              </tr>
            ))}
          </tbody>
        </table>
      </div>
      <div className="flex h-[41px] shrink-0 items-start justify-center pt-[11px]">
        <button type="button" className="h-[21px] w-[88px] rounded-[3px] border border-[#0078d4] bg-[#fdfdfd] text-xs leading-4">閉じる (C)</button>
      </div>
    </div>
  </div>
);

export default function App() {
  return (
    <div className={`relative flex h-screen flex-col overflow-hidden bg-[#f0f0f0] text-black [font-feature-settings:'palt'] ${JP}`}>
      <header className="shrink-0 border-b-2 border-[#8a8a8a]">
        <TitleBar />
        <MenuBar />
        <Toolbars />
      </header>
      <div className="flex min-h-0 flex-1">
        <aside className="flex w-[377px] shrink-0 flex-col border-r-2 border-[#8a8a8a]">
          <MarketWatch />
          <Navigator />
        </aside>
        <Chart />
      </div>
      <ContractDialog />
    </div>
  );
}
